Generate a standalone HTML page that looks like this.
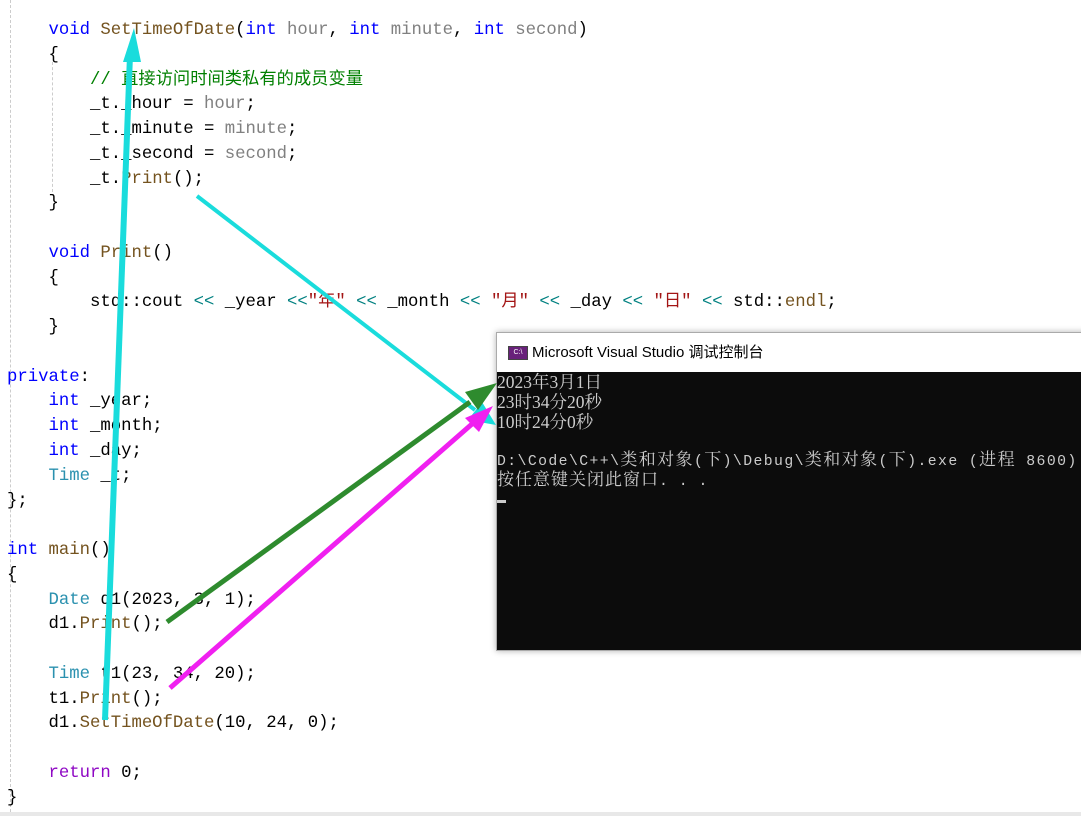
<!DOCTYPE html>
<html><head><meta charset="utf-8"><style>
html,body{margin:0;padding:0;width:1081px;height:816px;overflow:hidden;background:#fff;position:relative}
#code{position:absolute;left:7px;top:19px;font-family:"Liberation Mono","Noto Sans CJK SC",monospace;font-size:17.3px;line-height:24.77px;white-space:pre;color:#000}
.k{color:#0000ff}.f{color:#74531f}.p{color:#808080}.c{color:#008000}.t{color:#2b91af}.s{color:#a31515}.o{color:#008080}.r{color:#8f08c4}
.gut{position:absolute;left:33px;width:0;border-left:1px dashed #ccc}
#con{position:absolute;left:496px;top:332px;width:590px;height:317px;border:1px solid #aaa;background:#0c0c0c;box-shadow:0 0 6px rgba(0,0,0,.3)}
#tb{height:39px;background:#fff;font-family:"Liberation Sans","Noto Sans CJK SC",sans-serif;font-size:15px;color:#000;line-height:40px;padding-left:35px;position:relative}
#ic{position:absolute;left:11px;top:13px;width:18px;height:12px;background:#68217a;border:1px solid #444;color:#fff;font-size:7px;line-height:12px;text-align:center;font-family:"Liberation Sans",sans-serif}
#out{font-family:"Liberation Mono","Noto Serif CJK SC",monospace;font-size:14.8px;color:#cccccc;white-space:pre}
#out div{height:20px;line-height:20px;overflow:visible}
#out .z{font-size:17px}
#out .sf{font-family:"Liberation Serif","Noto Serif CJK SC",serif;font-size:17.5px}
#bot{position:absolute;left:0;top:812px;width:1081px;height:4px;background:#e8e8e8}
</style></head><body>
<div class="gut" style="top:0;height:812px;left:10px"></div>
<div class="gut" style="top:62px;height:130px;left:52px"></div>
<div id="code"><span>    <span class="k">void</span> <span class="f">SetTimeOfDate</span>(<span class="k">int</span> <span class="p">hour</span>, <span class="k">int</span> <span class="p">minute</span>, <span class="k">int</span> <span class="p">second</span>)
    {
        <span class="c">// 直接访问时间类私有的成员变量</span>
        _t._hour = <span class="p">hour</span>;
        _t._minute = <span class="p">minute</span>;
        _t._second = <span class="p">second</span>;
        _t.<span class="f">Print</span>();
    }

    <span class="k">void</span> <span class="f">Print</span>()
    {
        std::cout <span class="o">&lt;&lt;</span> _year <span class="o">&lt;&lt;</span><span class="s">"年"</span> <span class="o">&lt;&lt;</span> _month <span class="o">&lt;&lt;</span> <span class="s">"月"</span> <span class="o">&lt;&lt;</span> _day <span class="o">&lt;&lt;</span> <span class="s">"日"</span> <span class="o">&lt;&lt;</span> std::<span class="f">endl</span>;
    }

<span class="k">private</span>:
    <span class="k">int</span> _year;
    <span class="k">int</span> _month;
    <span class="k">int</span> _day;
    <span class="t">Time</span> _t;
};

<span class="k">int</span> <span class="f">main</span>()
{
    <span class="t">Date</span> d1(2023, 3, 1);
    d1.<span class="f">Print</span>();

    <span class="t">Time</span> t1(23, 34, 20);
    t1.<span class="f">Print</span>();
    d1.<span class="f">SetTimeOfDate</span>(10, 24, 0);

    <span class="r">return</span> 0;
}</span></div>
<div id="con"><div id="tb"><div id="ic">C:\</div>Microsoft Visual Studio 调试控制台</div>
<div id="out"><div class="sf">2023年3月1日</div><div class="sf">23时34分20秒</div><div class="sf">10时24分0秒</div><div></div><div style="letter-spacing:1.4px">D:\Code\C++\<span class="z">类和对象</span>(<span class="z">下</span>)\Debug\<span class="z">类和对象</span>(<span class="z">下</span>).exe (<span class="z">进程</span> 8600)</div><div style="letter-spacing:1px"><span class="z">按任意键关闭此窗口</span>. . .</div><div><span style="display:inline-block;width:9px;height:3px;background:#ccc;vertical-align:middle"></span></div></div></div>
<div id="bot"></div>
<svg width="1081" height="816" style="position:absolute;left:0;top:0">
<line x1="105" y1="720" x2="130" y2="55" stroke="#1adcdc" stroke-width="6"/>
<polygon points="134,28 123,62 141,62" fill="#1adcdc"/>
<line x1="197" y1="196" x2="475" y2="410" stroke="#1adcdc" stroke-width="4"/>
<polygon points="496,425 468,420 482,402" fill="#1adcdc"/>
<line x1="167" y1="622" x2="470" y2="402" stroke="#2e8b2e" stroke-width="5"/>
<polygon points="497,383 465,392 478,410" fill="#2e8b2e"/>
<line x1="170" y1="688" x2="472" y2="424" stroke="#f020f0" stroke-width="5"/>
<polygon points="493,406 465,418 479,432" fill="#f020f0"/>
</svg>
</body></html>
